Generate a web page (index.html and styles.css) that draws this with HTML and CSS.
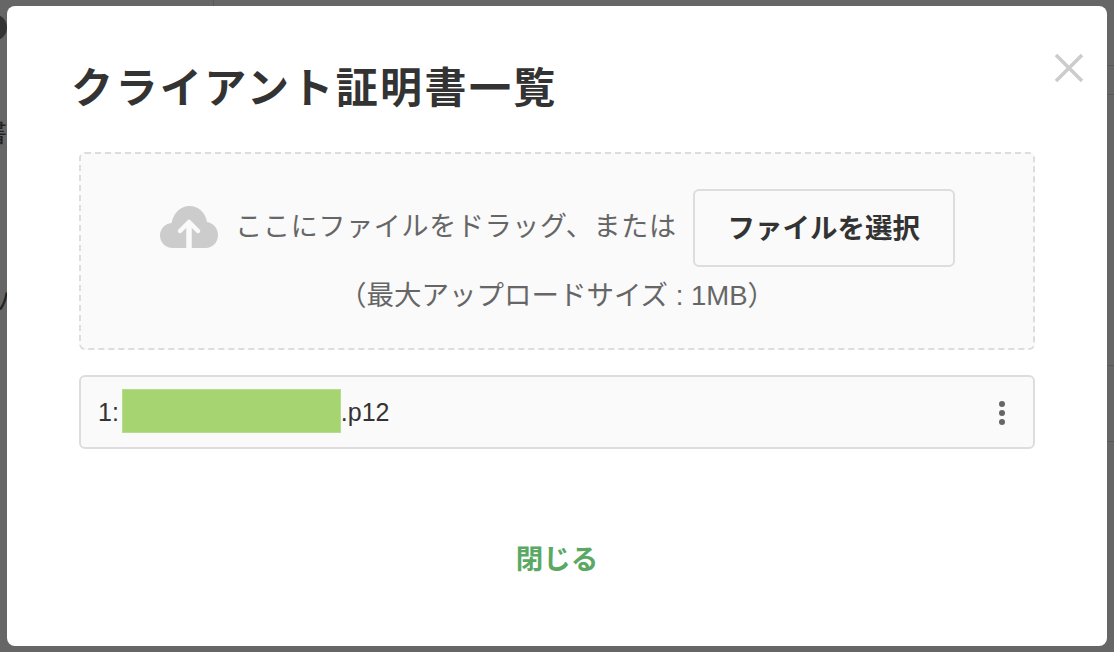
FILE: index.html
```html
<!DOCTYPE html>
<html lang="ja">
<head>
  <meta charset="UTF-8" />
  <title>クライアント証明書一覧</title>
  <link rel="stylesheet" href="styles.css">
</head>
<body>

<!-- ダイアログの裏に見えているページ -->
<div class="backdrop" aria-hidden="true">
  <span class="bg-avatar"></span>
  <span class="bg-vline"></span>
  <span class="bg-char bg-char-1">書</span>
  <span class="bg-char bg-char-2">ハ</span>
  <span class="bg-line bg-line-1"></span>
  <span class="bg-line bg-line-2"></span>
  <span class="bg-line bg-line-3"></span>
  <span class="bg-line bg-line-4"></span>
</div>

<div class="modal">
  <button class="modal-close" aria-label="閉じる">
    <svg width="30" height="30" viewBox="0 0 30 30">
      <path d="M2 2 L28 28 M28 2 L2 28" fill="none" stroke="#ccc" stroke-width="3.6" />
    </svg>
  </button>

  <h1 class="modal-title">クライアント証明書一覧</h1>

  <div class="dropzone">
    <div class="dropzone-row">
      <svg class="cloud-icon" width="60" height="44" viewBox="0 0 60 44">
        <path fill="#ccc" d="M14 43 C6 43 1 37 1 30.500 C1 24 6 18.500 12.500 18 C14.500 8 21.500 1 30.500 1 C39.500 1 46.500 7.500 48 17 C54 18 59 23 59 30 C59 37.500 53.500 43 46.500 43 Z" />
        <path fill="none" stroke="#fafafa" stroke-width="5.500" d="M30 44 V19" />
        <path fill="none" stroke="#fafafa" stroke-width="4.500" stroke-linecap="round" stroke-linejoin="round" d="M21 26 L30 17 L39 26" />
      </svg>
      <span class="dropzone-text">ここにファイルをドラッグ、または</span>
      <button class="file-button">ファイルを選択</button>
    </div>
    <p class="dropzone-note">（最大アップロードサイズ : 1MB）</p>
  </div>

  <div class="file-row">
    <span class="file-name">1:<span class="redacted"></span>.p12</span>
    <span class="file-menu"><i></i><i></i><i></i></span>
  </div>

  <div class="modal-footer">
    <a class="close-link" href="#">閉じる</a>
  </div>
</div>

</body>
</html>
```

FILE: styles.css
```css
* {
  box-sizing: border-box;
}

html,
body {
  height: 100%;
}

body {
  margin: 0;
  padding: 6px 7px;
  background-color: #666;
  color: #333;
  font-family: "Liberation Sans", "Noto Sans CJK JP", sans-serif;
  overflow: hidden;
}

/* 背景のページ */
.backdrop {
  position: absolute;
  top: 0;
  left: 0;
  right: 0;
  bottom: 0;
}

.bg-avatar {
  position: absolute;
  left: -20px;
  top: 14px;
  width: 27px;
  height: 27px;
  border-radius: 50%;
  background: #333;
}

.bg-vline {
  position: absolute;
  left: 213px;
  top: 0;
  width: 1px;
  height: 6px;
  background: #5a5a5a;
}

.bg-char {
  position: absolute;
  color: #222;
  font-size: 26px;
  line-height: 1;
}

.bg-char-1 {
  left: -19px;
  top: 120px;
}

.bg-char-2 {
  left: -3px;
  top: 288px;
}

.bg-line {
  position: absolute;
  left: 1107px;
  right: 0;
  height: 1px;
  background: #595959;
}

.bg-line-1 { top: 65px; }
.bg-line-2 { top: 94px; }
.bg-line-3 { top: 365px; }
.bg-line-4 { top: 441px; }

/* ダイアログ */
.modal {
  position: relative;
  width: 1100px;
  height: 640px;
  padding: 50px 72px 0;
  background: #fff;
  border-radius: 8px;
}

.modal-close {
  position: absolute;
  top: 47px;
  right: 23px;
  padding: 0;
  border: none;
  background: none;
  line-height: 0;
}

.modal-title {
  margin: 0 0 32px -8px;
  font-size: 42px;
  line-height: 66px;
  height: 64px;
  font-weight: 700;
  color: #333;
  letter-spacing: 2.400px;
}

.dropzone {
  height: 198px;
  padding-top: 35px;
  background: #fafafa;
  border: 2px dashed #ddd;
  border-radius: 6px;
  text-align: center;
}

.dropzone-row {
  display: flex;
  align-items: center;
  justify-content: center;
}

.cloud-icon {
  margin: 0 16px 2px 0;
}

.dropzone-text {
  font-size: 27px;
  line-height: 76px;
  height: 78px;
  letter-spacing: 0.700px;
  color: #666;
}

.file-button {
  width: 262px;
  height: 78px;
  margin-left: 16px;
  padding: 0 0 5px;
  background: #fafafa;
  border: 2px solid #ddd;
  border-radius: 6px;
  font-family: inherit;
  font-size: 27.500px;
  font-weight: 700;
  color: #333;
}

.dropzone-note {
  margin: 9px 0 0;
  font-size: 27.500px;
  line-height: 40px;
  color: #666;
}

.file-row {
  display: flex;
  align-items: center;
  justify-content: space-between;
  height: 74px;
  margin-top: 25px;
  padding: 0 28px 0 17px;
  background: #fafafa;
  border: 2px solid #ddd;
  border-radius: 6px;
}

.file-name {
  display: flex;
  align-items: center;
  font-size: 25px;
  white-space: pre;
  color: #333;
}

.redacted {
  display: block;
  width: 219px;
  height: 44px;
  margin: 0 0 2px 3px;
  background: #a5d471;
  border: 1px solid #b6dd8c;
}

.file-menu {
  display: flex;
  flex-direction: column;
  gap: 3px;
  margin-top: 2px;
}

.file-menu i {
  display: block;
  width: 6px;
  height: 6px;
  border-radius: 50%;
  background: #666;
}

.modal-footer {
  margin-top: 86px;
  text-align: center;
}

.close-link {
  font-size: 27.500px;
  line-height: 50px;
  font-weight: 700;
  color: #5aa864;
  text-decoration: none;
}
```
